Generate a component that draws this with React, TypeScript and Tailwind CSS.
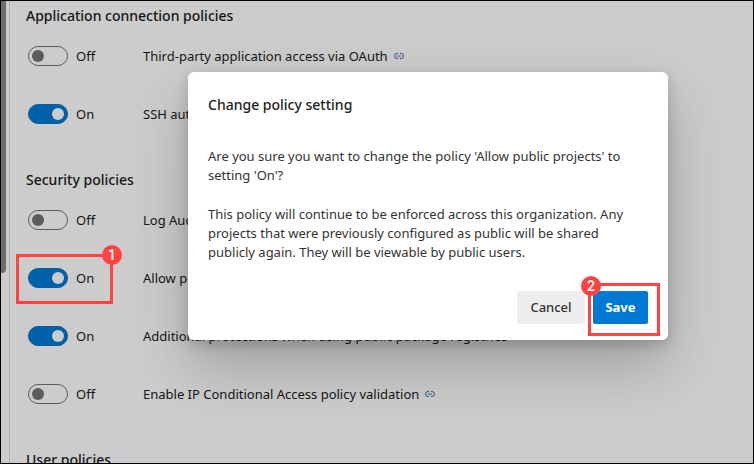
import { useState } from "react";

type Policy = { name: string; on: boolean; link?: boolean; step?: number };
type Section = { title: string; policies: Policy[] };

const sections: Section[] = [
  {
    title: "Application connection policies",
    policies: [
      { name: "Third-party application access via OAuth", on: false, link: true },
      { name: "SSH authentication", on: true },
    ],
  },
  {
    title: "Security policies",
    policies: [
      { name: "Log Audit Events", on: false },
      { name: "Allow public projects", on: true, step: 1 },
      { name: "Additional protections when using public package registries", on: true },
      { name: "Enable IP Conditional Access policy validation", on: false, link: true },
    ],
  },
  { title: "User policies", policies: [] },
];

function LinkIcon() {
  return (
    <svg width="10" height="6" viewBox="0 0 10 6" fill="none" stroke="#3c6ea5" strokeWidth="1">
      <path d="M4 .5H3a2.5 2.5 0 0 0 0 5h1M6 .5h1a2.5 2.5 0 0 1 0 5H6M3 3h4" />
    </svg>
  );
}

/* Numbered step marker: a red frame with a badge on one of its corners. */
function Callout({ step, frame, badge }: { step: number; frame: string; badge: string }) {
  return (
    <div className={`pointer-events-none absolute z-10 border-3 border-[#ff4343] ${frame}`}>
      <span
        className={`absolute flex size-5 items-center justify-center rounded-full bg-[#ff4343] font-['Roboto',sans-serif] text-sm font-medium text-white ${badge}`}
      >
        {step}
      </span>
    </div>
  );
}

function PolicyRow({ policy }: { policy: Policy }) {
  const [on, setOn] = useState(policy.on);
  return (
    <div className="flex h-[58px] items-center">
      <label className="relative ml-0.5 flex w-[115px] shrink-0 items-center gap-2">
        <input
          type="checkbox"
          role="switch"
          aria-label={policy.name}
          checked={on}
          onChange={(e) => setOn(e.target.checked)}
          className="flex h-5 w-10 shrink-0 appearance-none items-center rounded-full border border-[#737373] px-[3px] before:size-3 before:rounded-full before:bg-[#737373] checked:justify-end checked:border-[#0078d4] checked:bg-[#0078d4] checked:before:bg-white"
        />
        <span className="pt-px">{on ? "On" : "Off"}</span>
        {policy.step && (
          <Callout step={policy.step} frame="-left-3 -top-3.5 h-[50px] w-[97px]" badge="-top-3 -right-3" />
        )}
      </label>
      <span className="pt-px whitespace-nowrap">{policy.name}</span>
      {policy.link && (
        <a href="#learn" aria-label={`Learn more: ${policy.name}`} className="ml-1.5">
          <LinkIcon />
        </a>
      )}
    </div>
  );
}

export default function App() {
  return (
    <div className="relative flex h-screen overflow-hidden border border-black bg-white font-['Noto_Sans',sans-serif] text-[13px] leading-[19px] text-[#1b1b1b]">
      <div className="w-2 shrink-0">
        <div className="h-[272px] w-[5px] rounded-br-sm bg-[#8a8787]" />
      </div>
      <main className="flex min-w-0 flex-1 flex-col gap-[26px] border-l border-[#dcdcdc] pt-1 pl-4">
        {sections.map((s) => (
          <section key={s.title}>
            <h2 className="text-sm leading-[22px] font-medium">{s.title}</h2>
            {s.policies.map((p) => (
              <PolicyRow key={p.name} policy={p} />
            ))}
          </section>
        ))}
      </main>

      <div className="absolute inset-0 flex items-start justify-center bg-black/20 pt-[71px] pl-[102px]">
        <div
          role="dialog"
          aria-labelledby="dialog-title"
          className="w-full max-w-[480px] rounded-md bg-white px-5 pt-[22px] pb-4 text-[#333333] shadow-[0_26px_58px_rgba(0,0,0,0.22),0_5px_14px_rgba(0,0,0,0.18)]"
        >
          <h1 id="dialog-title" className="text-sm leading-[22px] font-medium text-[#222222]">
            Change policy setting
          </h1>
          <p className="mt-[31px]">
            Are you sure you want to change the policy 'Allow public projects' to setting 'On'?
          </p>
          <p className="mt-5">
            This policy will continue to be enforced across this organization. Any projects that were
            previously configured as public will be shared publicly again. They will be viewable by
            public users.
          </p>
          <div className="mt-[29px] flex justify-end gap-2">
            <button type="button" className="h-[33px] w-[68px] rounded-xs bg-[#eeeeee] font-medium">
              Cancel
            </button>
            <div className="relative">
              <button type="button" className="h-[33px] w-[55px] rounded-xs bg-[#0078d4] font-bold text-white">
                Save
              </button>
              <Callout step={2} frame="-left-[5px] -top-2 h-[53px] w-[72px]" badge="-top-2.5 -left-2.5" />
            </div>
          </div>
        </div>
      </div>
    </div>
  );
}
